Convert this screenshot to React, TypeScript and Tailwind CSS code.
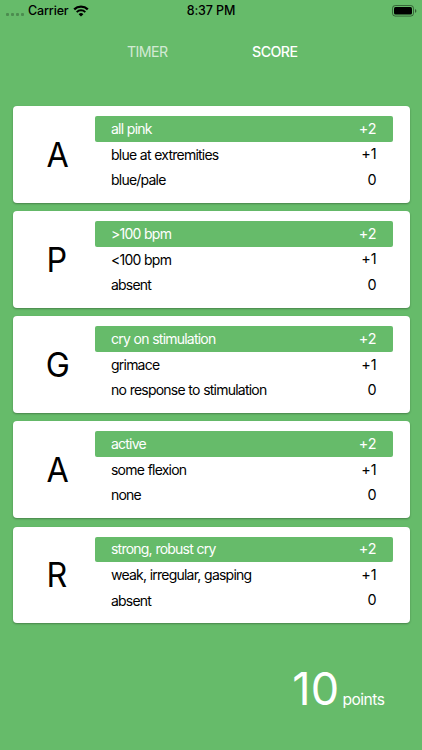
import { useState } from 'react';

interface Option {
  label: string;
  points: number;
}

interface Category {
  id: string;
  letter: string;
  options: Option[];
}

const CATEGORIES: Category[] = [
  {
    id: 'appearance',
    letter: 'A',
    options: [
      { label: 'all pink', points: 2 },
      { label: 'blue at extremities', points: 1 },
      { label: 'blue/pale', points: 0 },
    ],
  },
  {
    id: 'pulse',
    letter: 'P',
    options: [
      { label: '>100 bpm', points: 2 },
      { label: '<100 bpm', points: 1 },
      { label: 'absent', points: 0 },
    ],
  },
  {
    id: 'grimace',
    letter: 'G',
    options: [
      { label: 'cry on stimulation', points: 2 },
      { label: 'grimace', points: 1 },
      { label: 'no response to stimulation', points: 0 },
    ],
  },
  {
    id: 'activity',
    letter: 'A',
    options: [
      { label: 'active', points: 2 },
      { label: 'some flexion', points: 1 },
      { label: 'none', points: 0 },
    ],
  },
  {
    id: 'respiration',
    letter: 'R',
    options: [
      { label: 'strong, robust cry', points: 2 },
      { label: 'weak, irregular, gasping', points: 1 },
      { label: 'absent', points: 0 },
    ],
  },
];

function StatusBar() {
  return (
    <div className="grid h-5 grid-cols-3 items-center text-[12.5px] font-medium leading-5 text-black">
      <div className="flex items-center pl-[6px]">
        {/* No signal dots */}
        <div className="mt-[7px] flex gap-[2px]">
          <span className="size-[3px] rounded-[1px] bg-black/25" />
          <span className="size-[3px] rounded-[1px] bg-black/25" />
          <span className="size-[3px] rounded-[1px] bg-black/25" />
          <span className="size-[3px] rounded-[1px] bg-black/25" />
        </div>
        <span className="ml-[4px] mt-px tracking-[-0.15px]">Carrier</span>
        <svg className="ml-[4.5px] h-[12px] w-[16px]" viewBox="0 0 16 12" fill="none">
          <path d="M1.2 4.4a9.8 9.8 0 0 1 13.6 0" stroke="black" strokeWidth="2.3" />
          <path d="M3.7 7.1a6.2 6.2 0 0 1 8.6 0" stroke="black" strokeWidth="2" />
          <path d="M5.6 9.2a3.5 3.5 0 0 1 4.8 0L8 11.6z" fill="black" />
        </svg>
      </div>
      <div className="mt-px text-center tracking-[-0.1px]">8:37 PM</div>
      <div className="flex justify-end pr-[5px]">
        <svg className="h-[12px] w-[25px]" viewBox="0 0 25 12" fill="none">
          <rect x="0.5" y="0.5" width="21" height="10.6" rx="2.8" stroke="black" strokeOpacity="0.45" />
          <rect x="2" y="2" width="18" height="7.6" rx="1.5" fill="black" />
          <path d="M23 4v3.8a2 2 0 0 0 0-3.8z" fill="black" fillOpacity="0.5" />
        </svg>
      </div>
    </div>
  );
}

interface ScoreCardProps {
  category: Category;
  value: number;
  onChange: (points: number) => void;
}

function ScoreCard({ category, value, onChange }: ScoreCardProps) {
  return (
    <div className="flex h-[96.8px] rounded-[4px] bg-white pr-[16.5px] pt-[10px] shadow-[0_1px_2px_rgba(0,0,0,0.3)]">
      <div className="-mt-[10px] flex w-[82.5px] shrink-0 items-center justify-center pl-[7px] text-[34px] leading-none">
        <span className="scale-x-95">{category.letter}</span>
      </div>
      <div className="flex-1">
        {category.options.map((option) => (
          <button
            key={option.points}
            type="button"
            onClick={() => onChange(option.points)}
            className={`flex h-[25.6px] w-full items-center justify-between rounded-[2px] pl-[16px] pr-[16.6px] leading-none ${
              option.points === value ? 'bg-[#66bb6a] text-white' : 'text-black'
            }`}
          >
            <span className="text-[14px] tracking-[-0.78px] [word-spacing:0.4px]">{option.label}</span>
            <span className="text-[14.4px] tracking-[-0.1px]">
              {option.points > 0 ? `+${option.points}` : option.points}
            </span>
          </button>
        ))}
      </div>
    </div>
  );
}

export default function App() {
  const [tab, setTab] = useState<'timer' | 'score'>('score');
  const [scores, setScores] = useState<number[]>([2, 2, 2, 2, 2]);

  const total = scores.reduce((sum, points) => sum + points, 0);

  const handleChange = (index: number, points: number) => {
    setScores((prev) => prev.map((p, i) => (i === index ? points : p)));
  };

  return (
    <div className="flex h-[750px] w-[422px] flex-col overflow-hidden bg-[#66bb6a] font-['Inter',sans-serif]">
      <StatusBar />

      {/* Tabs */}
      <div className="mt-[18px] grid h-7 grid-cols-2 px-[83.5px] text-[14.2px] tracking-[-0.55px] text-white">
        <button
          type="button"
          onClick={() => setTab('timer')}
          className={tab === 'timer' ? 'font-medium' : 'opacity-70'}
        >
          TIMER
        </button>
        <button
          type="button"
          onClick={() => setTab('score')}
          className={tab === 'score' ? 'font-medium' : 'opacity-70'}
        >
          SCORE
        </button>
      </div>

      <div className="mt-[40.2px] flex flex-col gap-[8.3px] px-[12.5px]">
        {CATEGORIES.map((category, index) => (
          <ScoreCard
            key={category.id}
            category={category}
            value={scores[index]}
            onChange={(points) => handleChange(index, points)}
          />
        ))}
      </div>

      {/* Total */}
      <div className="mt-[42px] flex items-baseline justify-end gap-[3px] pr-[37.5px] text-white">
        <span className="text-[45px] leading-[48px] tracking-[0.3px]">{total}</span>
        <span className="text-[15.6px] leading-none tracking-[-0.5px]">points</span>
      </div>
    </div>
  );
}
